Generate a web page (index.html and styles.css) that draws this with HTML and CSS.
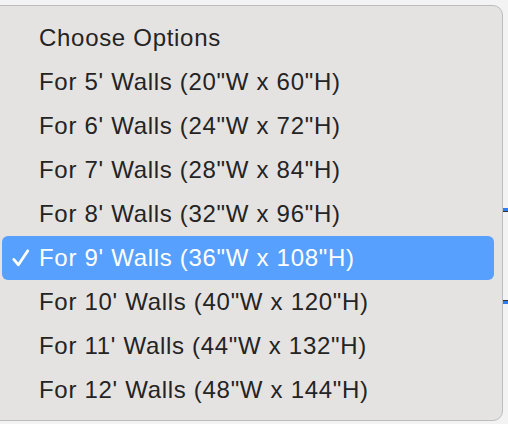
FILE: index.html
```html
<!DOCTYPE html>
<html>
<head>
<meta charset="utf-8">
<link rel="stylesheet" href="styles.css">
</head>
<body>
<div class="backdrop">
  <div class="rule rule-top"></div>
  <div class="rule rule-bottom"></div>
</div>
<div class="menu">
  <div class="item">Choose Options</div>
  <div class="item">For 5' Walls (20"W x 60"H)</div>
  <div class="item">For 6' Walls (24"W x 72"H)</div>
  <div class="item">For 7' Walls (28"W x 84"H)</div>
  <div class="item">For 8' Walls (32"W x 96"H)</div>
  <div class="item selected"><svg class="check" viewBox="0 0 20 20" width="20" height="20"><path d="M2.8 11.4 L7.4 16.8 L16.8 2.8" fill="none" stroke="#fff" stroke-width="2.8" stroke-linecap="round" stroke-linejoin="round"/></svg>For 9' Walls (36"W x 108"H)</div>
  <div class="item">For 10' Walls (40"W x 120"H)</div>
  <div class="item">For 11' Walls (44"W x 132"H)</div>
  <div class="item">For 12' Walls (48"W x 144"H)</div>
</div>
</body>
</html>
```
FILE: styles.css
```css
html, body {
  margin: 0;
  padding: 0;
  width: 508px;
  height: 424px;
  overflow: hidden;
  background: #f3f3f3;
  font-family: "Liberation Sans", Arial, sans-serif;
}
.backdrop {
  position: relative;
  width: 508px;
  height: 424px;
}
.rule {
  position: absolute;
  left: 503px;
  width: 5px;
  height: 4px;
  border-top: 1px solid #333;
  border-bottom: 3px solid #2f7bf0;
  box-sizing: border-box;
}
.rule-top { top: 208px; border-top: 3px solid #2f7bf0; border-bottom: 1px solid #333; }
.rule-bottom { top: 300px; }
.menu {
  position: absolute;
  top: 5px;
  left: -10px;
  width: 513px;
  height: 416px;
  box-sizing: border-box;
  background: #e4e3e2;
  border: 1px solid #bdbdbd;
  border-radius: 10px;
  padding: 10px 8px 0 10px;
  display: flex;
  flex-direction: column;
}
.item {
  height: 44px;
  display: flex;
  align-items: center;
  padding-left: 38px;
  font-size: 24px;
  color: #242424;
  letter-spacing: 0.7px;
  border-radius: 6px;
  position: relative;
}
.item.selected {
  background: #57a0fd;
  color: #fff;
  margin-left: 1px;
  padding-left: 37px;
}
.check {
  position: absolute;
  left: 9px;
  top: 12px;
}
```
